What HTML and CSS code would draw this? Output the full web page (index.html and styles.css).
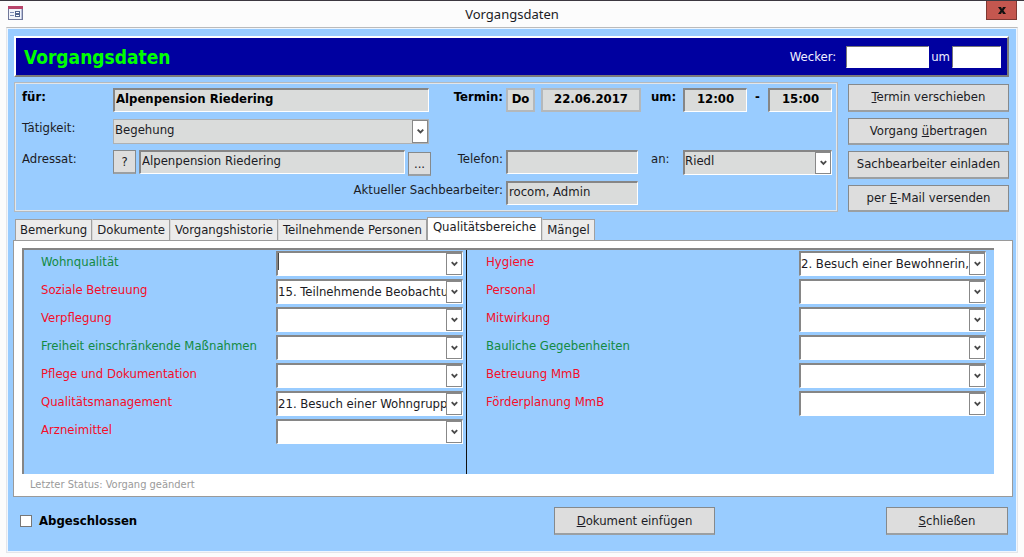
FILE: index.html
```html
<!DOCTYPE html>
<html lang="de">
<head>
<meta charset="utf-8">
<meta name="viewport" content="width=device-width, initial-scale=1">
<title>Vorgangsdaten</title>
<link rel="stylesheet" href="styles.css">
</head>
<body>
<div class="window">
  <header class="titlebar">
    <svg class="form-icon" width="15" height="14" viewBox="0 0 15 14" aria-hidden="true">
      <rect x="0.5" y="0.5" width="14" height="13" fill="#f2f4fa" stroke="#70789a"/>
      <rect x="0" y="0" width="15" height="3" fill="#b8446a"/>
      <path d="M2 6.5h4M2 9.5h4" stroke="#7e8db5"/>
      <rect x="7.5" y="5.5" width="4" height="2" fill="#fff" stroke="#53658f"/>
      <rect x="7.5" y="8.5" width="4" height="2" fill="#fff" stroke="#53658f"/>
      <path d="M13.5 3v10" stroke="#b9c2dc"/>
    </svg>
    <span class="caption">Vorgangsdaten</span>
    <button class="close" type="button" aria-label="Fenster schließen">
      <svg width="8" height="7" viewBox="0 0 8 7" aria-hidden="true"><path d="M0 0h3l1 2 1-2h3L5.500 3.500 8 7H5L4 5 3 7H0l2.500-3.500z" fill="#111"/></svg>
    </button>
  </header>
  <main class="form">
    <section class="banner">
      <h1>Vorgangsdaten</h1>
      <label for="wecker">Wecker:</label>
      <input class="alarm-date" id="wecker" type="text">
      <label for="wecker-zeit">um</label>
      <input class="alarm-time" id="wecker-zeit" type="text">
    </section>

    <section class="top">
      <div class="details">
        <label class="strong" for="fuer">für:</label>
        <input class="field strong end-gap" id="fuer" type="text" value="Alpenpension Riedering">
        <label class="strong right" for="tag">Termin:</label>
        <div class="date">
          <input class="field flat strong day" id="tag" type="text" value="Do">
          <input class="field flat strong day-date" type="text" value="22.06.2017" aria-label="Datum">
        </div>
        <label class="strong mid" for="von">um:</label>
        <div class="times">
          <input class="field strong" id="von" type="text" value="12:00">
          <label class="strong" for="bis">-</label>
          <input class="field strong" id="bis" type="text" value="15:00">
        </div>

        <label for="taetigkeit">Tätigkeit:</label>
        <div class="combo gray flat end-gap wide-end">
          <select id="taetigkeit"><option>Begehung</option></select>
          <svg class="arrow" viewBox="0 0 15 22"><path d="M5 9l3 3 3-3"/></svg>
        </div>

        <label class="row3" for="adressat">Adressat:</label>
        <div class="address">
          <button class="button small" type="button" aria-label="Hilfe">?</button>
          <input class="field" id="adressat" type="text" value="Alpenpension Riedering">
          <button class="button small low" type="button" aria-label="Auswählen">...</button>
        </div>
        <label class="right" for="telefon">Telefon:</label>
        <input class="field phone" id="telefon" type="text">
        <label class="mid" for="an">an:</label>
        <div class="combo gray">
          <select id="an"><option>Riedl</option></select>
          <svg class="arrow" viewBox="0 0 15 22"><path d="M5 9l3 3 3-3"/></svg>
        </div>

        <label class="right clerk" for="sachbearbeiter">Aktueller Sachbearbeiter:</label>
        <input class="field phone" id="sachbearbeiter" type="text" value="rocom, Admin">
      </div>
      <div class="actions">
        <button class="button" type="button"><u>T</u>ermin verschieben</button>
        <button class="button" type="button">Vorgang <u>ü</u>bertragen</button>
        <button class="button" type="button">Sachbearbeiter einladen</button>
        <button class="button" type="button">per <u>E</u>-Mail versenden</button>
      </div>
    </section>

    <nav class="tabs" role="tablist">
      <button class="tab" type="button" role="tab">Bemerkung</button>
      <button class="tab" type="button" role="tab">Dokumente</button>
      <button class="tab" type="button" role="tab">Vorgangshistorie</button>
      <button class="tab" type="button" role="tab">Teilnehmende Personen</button>
      <button class="tab active" type="button" role="tab" aria-selected="true">Qualitätsbereiche</button>
      <button class="tab" type="button" role="tab">Mängel</button>
    </nav>
    <section class="panel">
      <div class="areas">
        <div class="column first">
          <label class="green" for="a1">Wohnqualität</label>
          <div class="combo"><select id="a1"><option></option></select><span class="caret"></span><svg class="arrow" viewBox="0 0 15 22"><path d="M5 9l3 3 3-3"/></svg></div>
          <label class="red" for="a2">Soziale Betreuung</label>
          <div class="combo"><select id="a2"><option>15. Teilnehmende Beobachtung</option></select><svg class="arrow" viewBox="0 0 15 22"><path d="M5 9l3 3 3-3"/></svg></div>
          <label class="red" for="a3">Verpflegung</label>
          <div class="combo"><select id="a3"><option></option></select><svg class="arrow" viewBox="0 0 15 22"><path d="M5 9l3 3 3-3"/></svg></div>
          <label class="green" for="a4">Freiheit einschränkende Maßnahmen</label>
          <div class="combo"><select id="a4"><option></option></select><svg class="arrow" viewBox="0 0 15 22"><path d="M5 9l3 3 3-3"/></svg></div>
          <label class="red" for="a5">Pflege und Dokumentation</label>
          <div class="combo"><select id="a5"><option></option></select><svg class="arrow" viewBox="0 0 15 22"><path d="M5 9l3 3 3-3"/></svg></div>
          <label class="red" for="a6">Qualitätsmanagement</label>
          <div class="combo"><select id="a6"><option>21. Besuch einer Wohngruppe</option></select><svg class="arrow" viewBox="0 0 15 22"><path d="M5 9l3 3 3-3"/></svg></div>
          <label class="red" for="a7">Arzneimittel</label>
          <div class="combo"><select id="a7"><option></option></select><svg class="arrow" viewBox="0 0 15 22"><path d="M5 9l3 3 3-3"/></svg></div>
        </div>
        <div class="column second">
          <label class="red" for="b1">Hygiene</label>
          <div class="combo"><select id="b1"><option>2. Besuch einer Bewohnerin,</option></select><svg class="arrow" viewBox="0 0 15 22"><path d="M5 9l3 3 3-3"/></svg></div>
          <label class="red" for="b2">Personal</label>
          <div class="combo"><select id="b2"><option></option></select><svg class="arrow" viewBox="0 0 15 22"><path d="M5 9l3 3 3-3"/></svg></div>
          <label class="red" for="b3">Mitwirkung</label>
          <div class="combo"><select id="b3"><option></option></select><svg class="arrow" viewBox="0 0 15 22"><path d="M5 9l3 3 3-3"/></svg></div>
          <label class="green" for="b4">Bauliche Gegebenheiten</label>
          <div class="combo"><select id="b4"><option></option></select><svg class="arrow" viewBox="0 0 15 22"><path d="M5 9l3 3 3-3"/></svg></div>
          <label class="red" for="b5">Betreuung MmB</label>
          <div class="combo"><select id="b5"><option></option></select><svg class="arrow" viewBox="0 0 15 22"><path d="M5 9l3 3 3-3"/></svg></div>
          <label class="red" for="b6">Förderplanung MmB</label>
          <div class="combo"><select id="b6"><option></option></select><svg class="arrow" viewBox="0 0 15 22"><path d="M5 9l3 3 3-3"/></svg></div>
        </div>
      </div>
      <p class="status">Letzter Status: Vorgang geändert</p>
    </section>

    <footer class="footer">
      <label class="done strong"><input type="checkbox">Abgeschlossen</label>
      <button class="button insert" type="button"><u>D</u>okument einfügen</button>
      <button class="button exit" type="button"><u>S</u>chließen</button>
    </footer>
  </main>
</div>
</body>
</html>
```
FILE: styles.css
```css
* { box-sizing: border-box; }

body {
  margin: 0;
  background: #fcfcfc;
  color: #1b1b24;
  font: 13px/18px "DejaVu Sans Condensed", "Noto Sans", sans-serif;
}

button, input, select { font: inherit; color: inherit; margin: 0; border-radius: 0; }

.window {
  min-height: 100vh;
  border-top: 1px solid #3c3840;
  padding: 0 6px 4px;
  display: flex;
  flex-direction: column;
}

.titlebar {
  height: 26px;
  display: grid;
  grid-template-columns: 32px 1fr 32px;
  align-items: start;
}
.form-icon { margin: 5px 0 0 2px; }
.caption {
  text-align: center;
  font: 13px/26px "Noto Sans", sans-serif;
}
.close {
  width: 31px;
  height: 19px;
  padding: 0;
  border: 1px solid #7d3833;
  border-top: 0;
  background: #c4574f;
  display: flex;
  align-items: center;
  justify-content: center;
}

.form {
  flex: 1;
  border: 1px solid #e4e6ea;
  border-top-color: #bbb;
  background: #99ccff;
  box-shadow: inset 0 0 0 1px #eef6ff;
  padding: 8px 4px 17px 7px;
  display: flex;
  flex-direction: column;
}

.strong { font-weight: bold; color: #000; }
.right { text-align: right; padding-right: 3px; }

.banner {
  margin-right: 4px;
  height: 41px;
  background: #0000a0;
  border: 2px solid #fff;
  border-right-color: #7a7a7a;
  border-bottom-color: #7a7a7a;
  color: #f0f0ff;
  display: flex;
  align-items: center;
  padding: 0 6px 0 8px;
}
.banner h1 {
  flex: 1;
  margin: 0;
  font-size: 19px;
  line-height: 26px;
  color: #00ff00;
}
.banner input {
  height: 22px;
  padding: 0 3px;
  border: 1px solid #fff;
  border-top-color: #777;
  border-left-color: #777;
  background: #fff;
  color: #000;
}
.alarm-date { width: 83px; margin: 0 2px 0 10px; }
.alarm-time { width: 49px; margin-left: 2px; }

.top {
  margin: 5px 4px 0 0;
  display: grid;
  grid-template-columns: 1fr 161px;
  gap: 10px;
}
.details {
  border: 1px solid #b4b9be;
  box-shadow: inset 0 0 0 1px #e2e6ea;
  padding: 5px 5px 5px 7px;
  display: grid;
  grid-template-columns: 91px 1fr 75px 135px 42px 149px;
  grid-auto-rows: 25px;
  row-gap: 6px;
}
.field {
  width: 100%;
  min-width: 0;
  height: 24px;
  padding: 0 1px 4px;
  border: 2px solid #fff;
  border-top-color: #868686;
  border-left-color: #868686;
  border-right-width: 1px;
  border-bottom-width: 1px;
  background: #dadcdb;
}
.field.flat { border: 2px solid #b4b8bb; padding: 0 0 4px; text-align: center; }
.end-gap { width: calc(100% - 2px); }
.wide-end { grid-column: 2; }
.row3 { grid-column: 1; }
.mid { padding-left: 10px; }
.date { display: flex; gap: 6px; }
.date .day { flex: 0 0 29px; }
.times { display: grid; grid-template-columns: 64px 1fr 64px; text-align: center; }
.times .field { text-align: center; }
.address { display: grid; grid-template-columns: 23px 1fr 23px; gap: 3px; }
.phone { width: 132px; }
.clerk { grid-column: 2 / 4; }

.button {
  padding: 0;
  border: 1px solid #85898c;
  border-bottom: 2px solid #9b9fa2;
  background: #dddddd;
  text-align: center;
}
.button.small { height: 24px; line-height: 18px; }
.button.low { margin-top: 2px; }
.actions { display: grid; grid-template-rows: repeat(4, 1fr); gap: 6px; padding-top: 2px; }

.combo {
  position: relative;
  height: 25px;
  background: #fff;
  border: 2px solid #fff;
  border-top-color: #868686;
  border-left-color: #868686;
  border-right-width: 1px;
  border-bottom-width: 1px;
}
.combo select {
  appearance: none;
  display: block;
  width: 100%;
  height: 18px;
  padding: 0 16px 0 0;
  border: 0;
  background: transparent;
  color: #1b1b24;
}
.combo.gray { background: #dadcdb; }
.combo.flat { border: 1px solid #aeb1b3; padding: 1px; }
.arrow {
  position: absolute;
  top: 0;
  right: 0;
  width: 16px;
  height: 100%;
  background: #fff;
  border: 1px solid #888;
  fill: none;
  stroke: #4a4a4a;
  stroke-width: 2;
  pointer-events: none;
}
.caret {
  position: absolute;
  top: 0;
  left: 0;
  width: 1px;
  height: 17px;
  background: #444;
}

.tabs {
  margin-top: 5px;
  padding-left: 1px;
  display: flex;
  align-items: flex-end;
}
.tab {
  height: 21px;
  padding: 0 4px;
  border: 1px solid #a0a0a0;
  border-width: 1px 1px 0 1px;
  background: #ebebeb;
  white-space: nowrap;
}
.tab + .tab { border-left-color: #d8d8d8; }
.tab.active {
  height: 23px;
  padding: 0 5px 4px;
  border-left-color: #a0a0a0;
  background: #fff;
}

.panel {
  margin-left: -1px;
  flex: 1;
  background: #fff;
  border: 1px solid #9a9a9a;
  padding: 7px 18px 0 8px;
  display: flex;
  flex-direction: column;
}
.areas {
  flex: 1;
  background: #99ccff;
  border-top: 2px solid #858585;
  border-left: 2px solid #858585;
  display: grid;
  grid-template-columns: 443px 1fr;
}
.column {
  display: grid;
  grid-auto-rows: 25px;
  row-gap: 3px;
  align-content: start;
  padding: 1px 3px 0 17px;
  line-height: 22px;
}
.first { grid-template-columns: 1fr 187px; border-right: 1px solid #111; }
.second { grid-template-columns: 1fr 187px; padding-right: 8px; padding-left: 19px; }
.red { color: #f50d28; }
.green { color: #138a43; }
.status {
  margin: 0;
  padding-left: 8px;
  font-size: 11px;
  line-height: 22px;
  color: #9a9a9a;
}

.footer {
  margin: 10px 5px 0 6px;
  display: grid;
  grid-template-columns: 1fr 161px 171px 122px;
  align-items: center;
}
.footer .button { height: 28px; }
.exit { grid-column: 4; }
.done { display: flex; align-items: center; gap: 7px; }
.done input {
  appearance: none;
  width: 12px;
  height: 12px;
  background: #fff;
  border: 1px solid #777;
}
```
